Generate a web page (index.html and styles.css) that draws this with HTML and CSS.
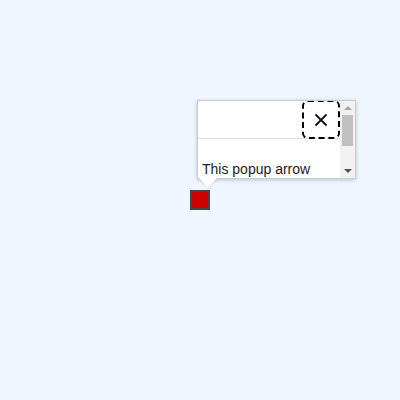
FILE: index.html
```html
<!DOCTYPE html>
<html>
<head>
<meta charset="utf-8">
<link rel="stylesheet" href="styles.css">
</head>
<body>
<div class="map">
  <div class="marker"></div>
  <div class="popup">
    <div class="popup-box">
      <div class="popup-content">
        <div class="popup-header">
          <div class="close">
            <svg width="14" height="14" viewBox="0 0 14 14"><path d="M1.5 1.5 L12.5 12.5 M12.5 1.5 L1.5 12.5" stroke="#111" stroke-width="1.8" fill="none"/></svg>
          </div>
        </div>
        <div class="popup-body">This popup arrow</div>
      </div>
      <div class="scrollbar">
        <div class="sb-up"></div>
        <div class="sb-track"><div class="sb-thumb"></div></div>
        <div class="sb-down"></div>
      </div>
    </div>
    <div class="arrow"></div>
  </div>
</div>
</body>
</html>
```
FILE: styles.css
```css
html, body {
  margin: 0;
  padding: 0;
  background: #eff6ff;
  font-family: "Liberation Sans", Arial, sans-serif;
}
.map {
  position: relative;
  width: 400px;
  height: 400px;
}
.marker {
  position: absolute;
  left: 190px;
  top: 190px;
  width: 16px;
  height: 16px;
  background: #cc0000;
  border: 2px solid #444;
}
.popup {
  position: absolute;
  left: 197px;
  top: 100px;
  width: 159px;
}
.popup-box {
  box-sizing: border-box;
  width: 159px;
  height: 79px;
  display: flex;
  background: #fff;
  border: 1px solid #ccc;
  box-shadow: 0 1px 4px rgba(0, 0, 0, 0.22);
}
.popup-content {
  flex: 1;
  min-width: 0;
  overflow: hidden;
}
.popup-header {
  display: flex;
  justify-content: flex-end;
  border-bottom: 1px solid #ddd;
  height: 37px;
}
.close {
  box-sizing: border-box;
  width: 38px;
  height: 39px;
  margin-top: -1px;
  border: 2px dashed #000;
  border-radius: 6px;
  display: flex;
  align-items: center;
  justify-content: center;
}
.close svg {
  display: block;
}
.popup-body {
  padding: 21px 4px 0 4px;
  font-size: 14px;
  line-height: 18px;
  color: #222;
  white-space: nowrap;
}
.scrollbar {
  width: 15px;
  display: flex;
  flex-direction: column;
  background: #f1f1f1;
}
.sb-up, .sb-down {
  height: 14px;
  display: flex;
  align-items: center;
  justify-content: center;
}
.sb-up::before {
  content: "";
  border-left: 4px solid transparent;
  border-right: 4px solid transparent;
  border-bottom: 4px solid #a3a3a3;
}
.sb-down::before {
  content: "";
  border-left: 4px solid transparent;
  border-right: 4px solid transparent;
  border-top: 4px solid #505050;
}
.sb-track {
  flex: 1;
  padding: 0 2px;
}
.sb-thumb {
  height: 31px;
  background: #c1c1c1;
}
.arrow {
  position: absolute;
  left: 2px;
  top: 78px;
  width: 0;
  height: 0;
  border-left: 9px solid transparent;
  border-right: 9px solid transparent;
  border-top: 10px solid #fff;
  filter: drop-shadow(0 1px 1px rgba(0,0,0,0.12));
}
```
